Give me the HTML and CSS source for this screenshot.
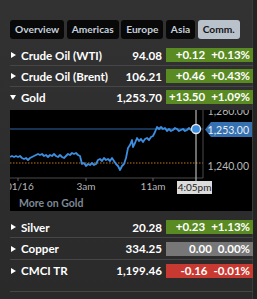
FILE: index.html
```html
<!DOCTYPE html>
<html>
<head>
<meta charset="utf-8">
<link rel="stylesheet" href="styles.css">
</head>
<body>
<div class="widget">
  <nav class="tabs">
    <span class="tab">Overview</span>
    <span class="tab">Americas</span>
    <span class="tab">Europe</span>
    <span class="tab">Asia</span>
    <span class="tab active">Comm.</span>
  </nav>
  <div class="list">
    <div class="row">
      <span class="arrow"></span><span class="name">Crude Oil (WTI)</span><span class="price">94.08</span>
      <span class="chg up"><span class="c">+0.12</span><span class="p">+0.13%</span></span>
    </div>
    <div class="row sep">
      <span class="arrow"></span><span class="name">Crude Oil (Brent)</span><span class="price">106.21</span>
      <span class="chg up"><span class="c">+0.46</span><span class="p">+0.43%</span></span>
    </div>
    <div class="row sep">
      <span class="arrow down"></span><span class="name">Gold</span><span class="price">1,253.70</span>
      <span class="chg up"><span class="c">+13.50</span><span class="p">+1.09%</span></span>
    </div>
    <div class="chart">
      <svg class="plot" width="242" height="86" viewBox="0 0 242 86">
        <line x1="0" y1="19" x2="193" y2="19" stroke="#2f67a8" stroke-width="1.2"/>
        <line x1="0" y1="53" x2="193" y2="53" stroke="#c4741c" stroke-width="1" stroke-dasharray="1.5 1.5"/>
        <line x1="0" y1="68" x2="193" y2="68" stroke="#4a4a4a" stroke-width="1"/>
        <line x1="193" y1="0" x2="193" y2="68" stroke="#4a4a4a" stroke-width="1"/>
        <line x1="8" y1="68" x2="8" y2="71" stroke="#666" stroke-width="1"/>
        <line x1="76" y1="68" x2="76" y2="71" stroke="#666" stroke-width="1"/>
        <line x1="143" y1="68" x2="143" y2="71" stroke="#666" stroke-width="1"/>
        <polyline fill="none" stroke="#3c8ee0" stroke-width="1.8" stroke-linejoin="round"
          points="0,47 2,46 4,47 6,46 8,47 10,46 12,48 14,49 16,48 18,50 20,48 22,47 24,46 26,45 28,44 30,45 32,44 34,46 36,45 38,47 40,45 42,46 44,44 46,46 48,47 50,45 52,47 54,48 56,46 58,44 60,45 62,43 64,44 66,43 68,45 70,46 71,50 72,54 74,53 76,56 78,54 80,55 82,53 84,55 86,54 88,50 90,49 92,51 94,48 96,50 98,49 100,51 102,48 104,51 106,54 108,56 110,60 112,56 114,54 116,48 118,38 120,35 122,30 123,37 125,33 127,28 129,31 131,29 133,32 135,29 137,28 139,30 141,27 143,26 145,22 147,17 149,19 151,17 153,19 155,18 157,21 159,19 161,21 163,20 165,18 167,19 169,21 171,20 173,19 175,21 177,20 179,18 181,20 183,19 186,19"/>
        <line x1="186" y1="0" x2="186" y2="72" stroke="#d8d8d8" stroke-width="1"/>
        <circle cx="186" cy="19" r="4.5" fill="#3c8ee0" stroke="#e8e8e8" stroke-width="1.3"/>
        <polygon points="195,19.5 201,12 243,12 243,27 201,27" fill="#3571b0"/>
        <text x="239" y="23.5" text-anchor="end" class="flag">1,253.00</text>
        <text x="239" y="5" text-anchor="end" class="ylab">1,260.00</text>
        <text x="239" y="60" text-anchor="end" class="ylab">1,240.00</text>
        <text x="-4" y="80" class="xlab">01/16</text>
        <text x="76" y="80" text-anchor="middle" class="xlab">3am</text>
        <text x="143" y="80" text-anchor="middle" class="xlab">11am</text>
        <rect x="167" y="71" width="35" height="13" fill="#dcdcdc"/>
        <text x="184.5" y="81" text-anchor="middle" class="tlab">4:05pm</text>
      </svg>
      <a class="more">More on Gold</a>
    </div>
    <div class="row after">
      <span class="arrow"></span><span class="name">Silver</span><span class="price">20.28</span>
      <span class="chg up"><span class="c">+0.23</span><span class="p">+1.13%</span></span>
    </div>
    <div class="row sep tall">
      <span class="arrow"></span><span class="name">Copper</span><span class="price">334.25</span>
      <span class="chg flat"><span class="c">0.00</span><span class="p">0.00%</span></span>
    </div>
    <div class="row sep tall">
      <span class="arrow"></span><span class="name">CMCI TR</span><span class="price">1,199.46</span>
      <span class="chg down"><span class="c">-0.16</span><span class="p">-0.01%</span></span>
    </div>
    <div class="endline"></div>
  </div>
</div>
</body>
</html>
```

FILE: styles.css
```css
html, body {
  margin: 0;
  padding: 0;
}
body {
  width: 257px;
  height: 299px;
  overflow: hidden;
  background: linear-gradient(180deg, #323232 0%, #2d2d2d 60%, #2a2a2a 100%);
  font-family: Lato, "Open Sans", sans-serif;
  color: #fff;
}
.widget {
  height: 299px;
  border-right: 4px solid #232323;
  box-shadow: inset -1px 0 0 #3a3a3a;
  box-sizing: border-box;
}
.tabs {
  display: flex;
  gap: 2.5px;
  padding: 20px 0 0 10px;
}
.tab {
  height: 19px;
  line-height: 19px;
  padding: 0 5px;
  background: #080808;
  border-radius: 3px;
  font-size: 10.2px;
  font-weight: 700;
  color: #c6d0dc;
}
.tab.active {
  background: #b9c2cb;
  color: #141414;
}
.list {
  margin: 6px 0 0 10px;
  width: 243px;
}
.row {
  display: grid;
  grid-template-columns: 11px 1fr auto 87px;
  align-items: center;
  height: 20px;
}
.row.tall {
  height: 21px;
}
.row.sep {
  border-top: 1px solid #464646;
}
.row.after {
  margin-top: 6px;
}
.arrow {
  width: 0;
  height: 0;
  border-left: 5px solid #fff;
  border-top: 3.5px solid transparent;
  border-bottom: 3.5px solid transparent;
  margin-left: 1px;
}
.arrow.down {
  border-top: 5px solid #fff;
  border-left: 3.5px solid transparent;
  border-right: 3.5px solid transparent;
  border-bottom: 0;
  margin-left: 0;
}
.name {
  font-size: 11.6px;
  font-weight: 700;
  white-space: nowrap;
}
.price {
  font-size: 11.6px;
  font-weight: 700;
  text-align: right;
  padding-right: 4px;
}
.chg {
  display: flex;
  justify-content: flex-end;
  gap: 6px;
  height: 14px;
  line-height: 14px;
  font-size: 11.5px;
  font-weight: 700;
  padding-right: 3px;
}
.chg.up { background: #5a8b23; }
.chg.flat { background: #777; }
.chg.down { background: #c83a31; }
.chart {
  margin-top: 3px;
  background: #000;
  height: 101px;
  width: 242px;
  display: flex;
  flex-direction: column;
}
.plot {
  display: block;
  overflow: hidden;
}
.plot text {
  font-family: Lato, "Open Sans", sans-serif;
}
.flag {
  font-size: 10.5px;
  fill: #e8eef6;
}
.ylab {
  font-size: 10.5px;
  fill: #b8b8b8;
}
.xlab {
  font-size: 10px;
  fill: #b8b8b8;
}
.tlab {
  font-size: 10px;
  fill: #222;
}
.more {
  padding: 1px 0 0 9px;
  font-size: 10.5px;
  font-weight: 700;
  color: #7d8896;
}
.endline {
  margin-top: 10px;
  border-top: 1px solid #464646;
}
```
